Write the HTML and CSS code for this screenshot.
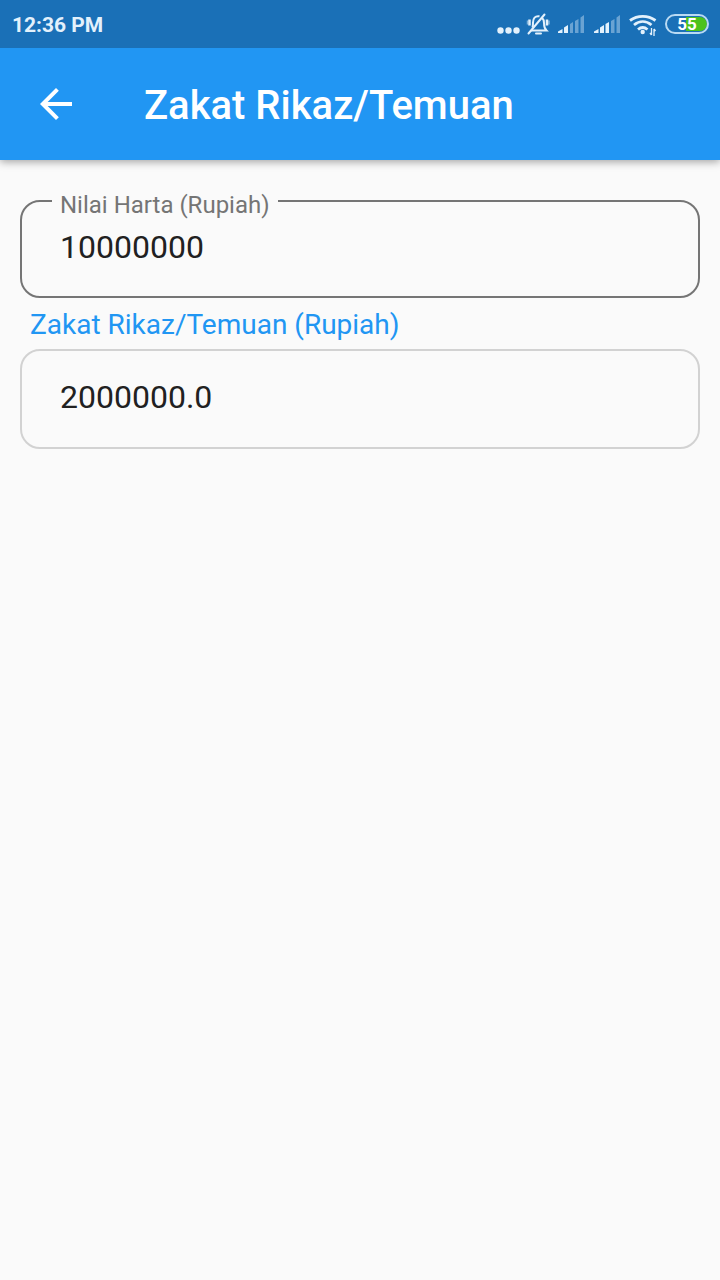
FILE: index.html
```html
<!DOCTYPE html>
<html lang="id">
<head>
<meta charset="utf-8">
<meta name="viewport" content="width=device-width, initial-scale=1">
<title>Zakat Rikaz/Temuan</title>
<link rel="stylesheet" href="styles.css">
</head>
<body>
<div class="status-bar">
  <span class="clock">12:36 PM</span>
  <div class="indicators">
    <svg width="24" height="28" viewBox="0 0 24 28" fill="currentColor" aria-hidden="true">
      <circle cx="4.500" cy="20.500" r="3.200"/><circle cx="12.500" cy="20.500" r="3.200"/><circle cx="20.500" cy="20.500" r="3.200"/>
    </svg>
    <svg width="24" height="28" viewBox="0 0 24 28" fill="none" stroke="currentColor" stroke-width="2" aria-hidden="true">
      <path d="M5 20.500h15.500c-2-2-2.500-4-2.500-7.500 0-2-.5-3.800-1.800-5M13.500 6.300C9 5.500 7 8.500 7 12.500c0 2 0 3.500-.5 5"/>
      <path d="M10 23.500h5M2.500 23.500 18.500 4.500" stroke-linecap="round"/>
      <path d="M3.500 9.500v6M21 9.500v6" stroke-width="2.500"/>
      <path d="M1.500 10.500v4M23 10.500v4" stroke-width="1.500" opacity=".5"/>
    </svg>
    <svg width="30" height="28" viewBox="0 0 30 28" fill="currentColor" aria-hidden="true">
      <path d="M2 21.500 6.500 19v4H2zM8 17.500l4-2.500v8H8z"/>
      <path d="m14 14 3-2v11h-3zM19 11l3.500-2v14H19zM24.500 7.500 28 5v18h-3.500z" opacity=".4"/>
    </svg>
    <svg width="30" height="28" viewBox="0 0 30 28" fill="currentColor" aria-hidden="true">
      <path d="M2 21.500 6.500 19v4H2zM8 17.500l4-2.500v8H8zM13.500 14l3.500-2v11h-3.500z"/>
      <path d="m19 11 3.500-2v14H19zM24.500 7.500 28 5v18h-3.500z" opacity=".4"/>
    </svg>
    <svg width="30" height="28" viewBox="0 0 30 28" fill="none" stroke="currentColor" stroke-width="2.800" aria-hidden="true">
      <path d="M2 10.500c7.500-5.500 18-5.500 25.500 0M6 15c5.500-4.500 12-4.500 17.500 0M10 19.500c3-2.500 6.500-2.500 9.500 0"/>
      <circle cx="14.700" cy="22" r="2.200" fill="currentColor" stroke="none"/>
      <path d="M23.500 18v7M26 19v7M22 23l1.500 2M26 19l1.500 2" stroke-width="1.300"/>
    </svg>
    <svg width="46" height="28" viewBox="0 0 46 28" aria-hidden="true">
      <path d="M22 7h14a7 7 0 0 1 0 14H22z" fill="#4cc21c"/>
      <rect x="2" y="5" width="42" height="18" rx="9" fill="none" stroke="#b9daf3" stroke-width="2"/>
      <text class="battery-level" x="23" y="20" text-anchor="middle">55</text>
    </svg>
  </div>
</div>
<header class="app-bar">
  <button class="back" type="button" aria-label="Kembali">
    <svg width="48" height="48" viewBox="0 0 24 24" fill="currentColor" aria-hidden="true"><path d="M20 11H7.830l5.590-5.590L12 4l-8 8 8 8 1.410-1.410L7.830 13H20z"/></svg>
  </button>
  <h1 class="title">Zakat Rikaz/Temuan</h1>
</header>
<main class="content">
  <div class="field">
    <label class="floating-label" for="harta">Nilai Harta (Rupiah)</label>
    <input class="input" id="harta" type="text" inputmode="decimal" value="10000000">
  </div>
  <label class="result-label" for="zakat">Zakat Rikaz/Temuan (Rupiah)</label>
  <div class="field">
    <input class="input input-result" id="zakat" type="text" value="2000000.0" readonly>
  </div>
</main>
</body>
</html>
```
FILE: styles.css
```css
* {
  box-sizing: border-box;
}

body {
  margin: 0;
  min-height: 100vh;
  background: #fafafa;
  color: #212121;
  font-family: Roboto, sans-serif;
}

.status-bar {
  position: relative;
  z-index: 1;
  display: flex;
  align-items: center;
  justify-content: space-between;
  height: 48px;
  padding: 0 10px 0 12px;
  background: #1a70b7;
  color: #e3f1fc;
}

.clock {
  padding-top: 2px;
  font-size: 21px;
  font-weight: 700;
}

.indicators {
  display: flex;
  align-items: center;
  gap: 6px;
}

.battery-level {
  fill: #fff;
  font-size: 17px;
  font-weight: 700;
}

.app-bar {
  display: flex;
  align-items: center;
  gap: 64px;
  height: 112px;
  padding: 0 32px;
  background: #2196f3;
  color: #fff;
  box-shadow: 0 2px 8px rgba(0, 0, 0, 0.35);
}

.back {
  display: flex;
  padding: 0;
  border: 0;
  background: none;
  color: inherit;
}

.title {
  margin: 0;
  padding-top: 4px;
  font-size: 40px;
  font-weight: 500;
  line-height: 48px;
}

.content {
  display: flex;
  flex-direction: column;
  padding: 40px 20px;
}

.field {
  position: relative;
  display: flex;
}

.floating-label {
  position: absolute;
  top: -9px;
  left: 32px;
  padding: 0 8px;
  background: #fafafa;
  color: #757575;
  font-size: 24px;
  line-height: 28px;
}

.input {
  flex: 1;
  min-width: 0;
  height: 98px;
  padding: 0 38px 4px;
  border: 2px solid #757575;
  border-radius: 20px;
  background: transparent;
  color: #212121;
  font-family: inherit;
  font-size: 32px;
  outline: 0;
}

.input-result {
  height: 100px;
  border-color: #d2d2d2;
}

.result-label {
  padding: 11px 10px 8px;
  color: #2196f3;
  font-size: 28px;
  line-height: 32px;
}
```
